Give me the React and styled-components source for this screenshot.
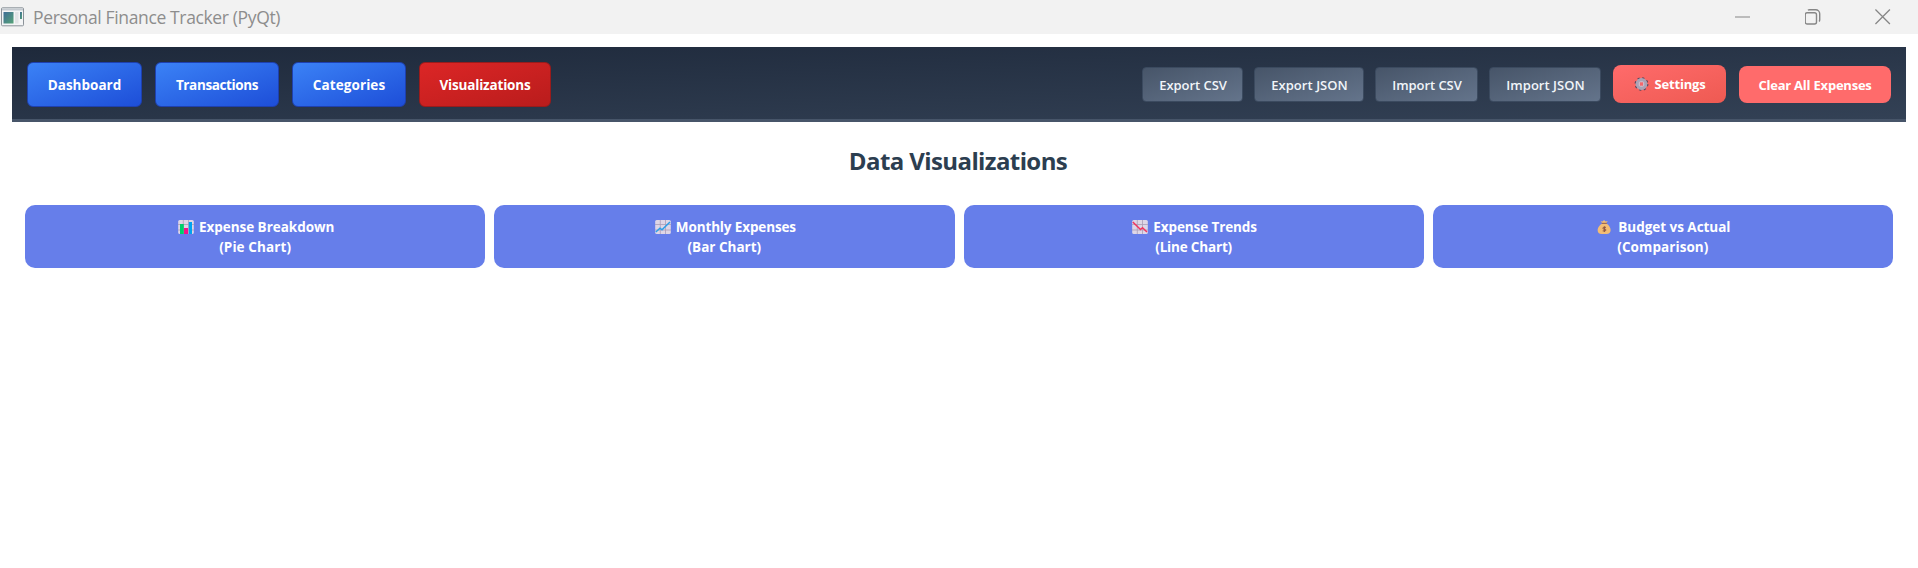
import React from "react";
import styled, { createGlobalStyle } from "styled-components";

const GlobalStyle = createGlobalStyle`
  * { box-sizing: border-box; }
  body { margin: 0; background: #fff; font-family: "Open Sans", "Noto Sans", sans-serif; }
`;

const Window = styled.div`
  height: 568px;
  overflow: hidden;
  display: flex;
  flex-direction: column;
  background: #fff;
`;

const TitleBar = styled.header`
  flex: none;
  height: 34px;
  padding: 0 27px 1px 1px;
  display: flex;
  align-items: center;
  background: #f2f2f2;
`;

const WindowTitle = styled.span`
  margin-left: 8px;
  flex: 1;
  padding-top: 1px;
  font-size: 17.5px;
  line-height: 30px;
  letter-spacing: -0.36px;
  color: #8d8d8d;
  white-space: nowrap;
`;

const WindowControls = styled.div`
  display: flex;
  align-items: center;
  gap: 54px;
  color: #868686;
`;

const Toolbar = styled.nav`
  flex: none;
  height: 75px;
  margin: 13px 12px 0;
  padding: 3px 15px 0;
  display: flex;
  align-items: center;
  justify-content: space-between;
  background: linear-gradient(to bottom right, #1e293b, #334155);
  border-bottom: 3px solid #475569;
`;

const NavGroup = styled.div`
  display: flex;
  align-items: center;
  gap: 13px;
`;

const ActionGroup = styled.div`
  display: flex;
  align-items: center;
  gap: 11px;
`;

const Button = styled.button`
  display: flex;
  align-items: center;
  justify-content: center;
  width: ${(p) => p.$width}px;
  padding: 0;
  font: 700 13px/20px "Open Sans", "Noto Sans", sans-serif;
  letter-spacing: ${(p) => p.$spacing || 0}px;
  color: #fff;
  white-space: nowrap;
`;

const NavButton = styled(Button)`
  height: 45px;
  padding-top: 1px;
  border: 1px solid ${(p) => (p.$active ? "#991b1b" : "#1e40af")};
  border-radius: 6px;
  background: ${(p) =>
    p.$active
      ? "linear-gradient(to bottom right, #dc2626, #b91c1c)"
      : "linear-gradient(to bottom right, #3b82f6, #1d4ed8)"};
  font-size: 13.5px;
`;

const FileButton = styled(Button)`
  height: 35px;
  padding: 1px 0 0 1px;
  border: 1px solid #3b4a5f;
  border-radius: 4px;
  background: linear-gradient(to bottom right, #475569, #64748b);
  font-weight: 600;
  color: #f1f5f9;
`;

const SettingsButton = styled(Button)`
  height: 38px;
  margin: 0 2px 1px 1px;
  padding-left: 1px;
  gap: 5px;
  border: 0;
  border-radius: 8px;
  background: linear-gradient(to bottom right, #ff6b6b, #ee5a52);
`;

const ClearButton = styled(Button)`
  height: 37px;
  padding-top: 1px;
  border: 0;
  border-radius: 8px;
  background: #ff6b6b;
`;

const Heading = styled.h1`
  flex: none;
  margin: 22px 0 0;
  padding-right: 2px;
  text-align: center;
  font-size: 24px;
  line-height: 34px;
  font-weight: 700;
  letter-spacing: -0.6px;
  color: #2c3e50;
`;

const ChartGrid = styled.main`
  display: grid;
  grid-template-columns: repeat(4, 1fr);
  gap: 9px;
  margin: 27px 25px 0;
`;

const ChartButton = styled.button`
  height: 63px;
  padding: 1px 0 0;
  display: flex;
  flex-direction: column;
  align-items: center;
  justify-content: center;
  border: 0;
  border-radius: 10px;
  background: #667eea;
  color: #fff;
  font: 700 13.5px/20px "Open Sans", "Noto Sans", sans-serif;
`;

const ChartLine = styled.span`
  display: flex;
  align-items: center;
  gap: 5px;
  height: 20px;
  letter-spacing: ${(p) => p.$spacing || 0}px;
  white-space: nowrap;
`;

const ChartTitle = styled(ChartLine)`
  padding-left: 2px;
`;

const AppIcon = () => (
  <svg width="24" height="20" viewBox="0 0 24 20">
    <defs>
      <linearGradient id="pane" x1="0" y1="0" x2="1" y2="1">
        <stop offset="0" stopColor="#3e6d96" />
        <stop offset="1" stopColor="#56a377" />
      </linearGradient>
    </defs>
    <rect x="0.5" y="0.8" width="22" height="18" rx="1" fill="#f4f5f6" stroke="#8b9299" />
    <path d="M1 2.5h21" stroke="#c5cad0" strokeWidth="2" />
    <rect x="2.5" y="5" width="10" height="11.5" fill="url(#pane)" />
    <rect x="14" y="5" width="3.5" height="11.5" fill="#e2e4e6" />
    <rect x="19" y="5" width="2" height="7" fill="url(#pane)" />
  </svg>
);

const MinimizeIcon = () => (
  <svg width="16" height="16" viewBox="0 0 16 16">
    <path d="M0 8h15" stroke="currentColor" />
  </svg>
);

const RestoreIcon = () => (
  <svg width="16" height="16" viewBox="0 0 16 16" fill="none" stroke="currentColor" strokeWidth="1.4">
    <rect x="0.2" y="3.7" width="11.3" height="11.3" rx="2" />
    <path d="M3 1.2Q3.500.7 4.500.7h6.200a4 4 0 0 1 4 4V11q0 1-.8 1.400" />
  </svg>
);

const CloseIcon = () => (
  <svg width="16" height="16" viewBox="0 0 16 16">
    <path d="M.4.5l14.500 14.500M14.900.5L.4 15" stroke="currentColor" strokeWidth="1.300" />
  </svg>
);

const GearIcon = () => (
  <svg width="15" height="14" viewBox="0 0 15 14">
    <circle cx="7.5" cy="7" r="6.1" fill="none" stroke="#54465a" strokeWidth="1.6" strokeDasharray="2.2 2.59" />
    <circle cx="7.5" cy="7" r="4" fill="none" stroke="#aaa2b5" strokeWidth="3.8" />
    <rect x="5.3" y="4.8" width="4.4" height="4.4" rx="1" fill="#f5666b" stroke="#cfc8d8" strokeWidth="1" />
  </svg>
);

const ChartPaper = ({ children }) => (
  <svg width="16" height="14" viewBox="0 0 16 14">
    <rect x="0.2" y="0" width="15.6" height="14" rx="1.5" fill="#ded6e6" />
    <path d="M5.3 0v14M10.5 0v14M0 4.5h16M0 10h16" stroke="#a99db6" strokeWidth="0.8" />
    {children}
  </svg>
);

const BarsIcon = () => (
  <ChartPaper>
    <path d="M2 14V4h3.8v10z" fill="#00cf6b" />
    <path d="M6 14V8h4v6z" fill="#f5118d" />
    <path d="M10.8 14V2H14v12z" fill="#00a3f0" />
  </ChartPaper>
);

const RisingIcon = () => (
  <ChartPaper>
    <path d="M.8 12L5 8.2l2 1.6L15 2" fill="none" stroke="#2b9fe8" strokeWidth="1.5" />
  </ChartPaper>
);

const FallingIcon = () => (
  <ChartPaper>
    <path d="M.8 2L8.5 9.5l2-1.8L15 12" fill="none" stroke="#f1345f" strokeWidth="1.5" />
  </ChartPaper>
);

const MoneyBagIcon = () => (
  <svg width="16" height="14" viewBox="0 0 16 14">
    <path d="M3.6 1.2l2 .3L7 0l1.6 1.4 2.2-.3L9.2 3.2H5.3z" fill="#f3bd74" />
    <path d="M5.2 3.4h4.2c2.5 1.6 4.2 4.2 4.2 6.6 0 2.6-1.6 4-4 4h-5c-2.6 0-4-1.4-4-4 0-2.4 2-5 4.6-6.6z" fill="#f3bd74" />
    <path d="M4.8 3.3h5" stroke="#8c5543" strokeWidth="0.9" />
    <path d="M9 7.3H6.9q-1 0-1 .9t1 .9h1q1 0 1 .9t-1 .9H5.7M7.4 6.3V12" fill="none" stroke="#8c5543" strokeWidth="1" />
  </svg>
);

const navItems = [
  { label: "Dashboard", width: 115, spacing: 0 },
  { label: "Transactions", width: 124, spacing: -0.38 },
  { label: "Categories", width: 114, spacing: 0.1 },
  { label: "Visualizations", width: 132, spacing: -0.18, active: true },
];

const fileItems = [
  { label: "Export CSV", width: 101, spacing: -0.05 },
  { label: "Export JSON", width: 110, spacing: 0.05 },
  { label: "Import CSV", width: 103, spacing: -0.05 },
  { label: "Import JSON", width: 112, spacing: 0.03 },
];

const charts = [
  { Icon: BarsIcon, title: "Expense Breakdown", kind: "(Pie Chart)", titleSpacing: -0.03, kindSpacing: 0.1 },
  { Icon: RisingIcon, title: "Monthly Expenses", kind: "(Bar Chart)", titleSpacing: -0.13, kindSpacing: 0 },
  { Icon: FallingIcon, title: "Expense Trends", kind: "(Line Chart)", titleSpacing: -0.1, kindSpacing: -0.18 },
  { Icon: MoneyBagIcon, title: "Budget vs Actual", kind: "(Comparison)", titleSpacing: -0.03, kindSpacing: 0.08 },
];

export default function App() {
  return (
    <Window>
      <GlobalStyle />
      <TitleBar>
        <AppIcon />
        <WindowTitle>Personal Finance Tracker (PyQt)</WindowTitle>
        <WindowControls>
          <MinimizeIcon />
          <RestoreIcon />
          <CloseIcon />
        </WindowControls>
      </TitleBar>
      <Toolbar>
        <NavGroup>
          {navItems.map((n) => (
            <NavButton key={n.label} $width={n.width} $active={n.active} $spacing={n.spacing}>
              {n.label}
            </NavButton>
          ))}
        </NavGroup>
        <ActionGroup>
          {fileItems.map((f) => (
            <FileButton key={f.label} $width={f.width} $spacing={f.spacing}>
              {f.label}
            </FileButton>
          ))}
          <SettingsButton $width={113} $spacing={-0.15}>
            <GearIcon />
            <span>Settings</span>
          </SettingsButton>
          <ClearButton $width={152} $spacing={-0.22}>
            Clear All Expenses
          </ClearButton>
        </ActionGroup>
      </Toolbar>
      <Heading>Data Visualizations</Heading>
      <ChartGrid>
        {charts.map(({ Icon, title, kind, titleSpacing, kindSpacing }) => (
          <ChartButton key={title}>
            <ChartTitle $spacing={titleSpacing}>
              <Icon />
              <span>{title}</span>
            </ChartTitle>
            <ChartLine $spacing={kindSpacing}>{kind}</ChartLine>
          </ChartButton>
        ))}
      </ChartGrid>
    </Window>
  );
}
